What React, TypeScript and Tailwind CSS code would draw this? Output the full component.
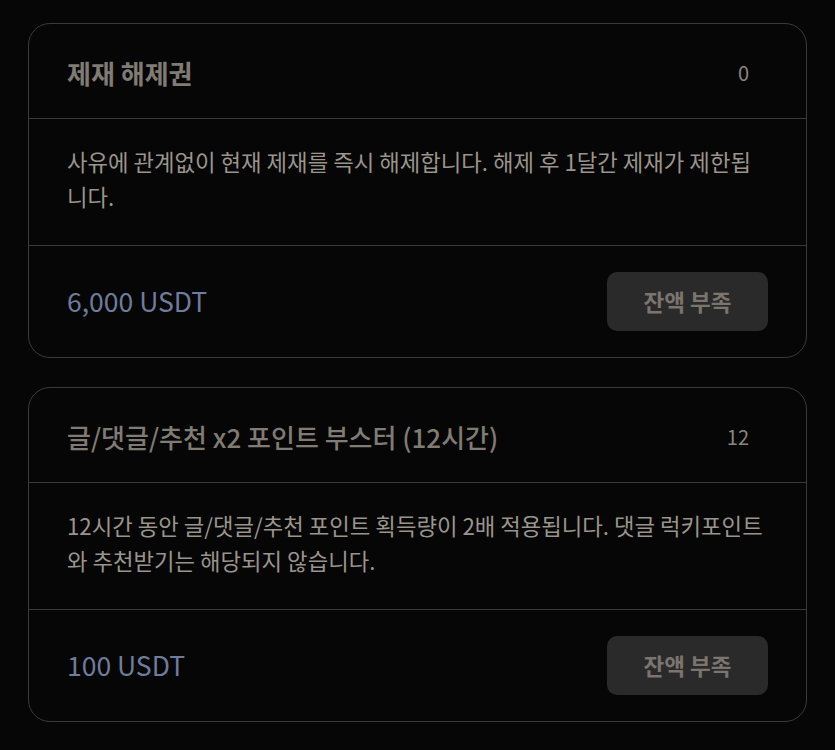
const items = [
  {
    title: '제재 해제권',
    titleWeight: 'font-bold',
    count: 0,
    description: '사유에 관계없이 현재 제재를 즉시 해제합니다. 해제 후 1달간 제재가 제한됩니다.',
    price: '6,000 USDT',
  },
  {
    title: '글/댓글/추천 x2 포인트 부스터 (12시간)',
    titleWeight: 'font-medium',
    count: 12,
    description:
      '12시간 동안 글/댓글/추천 포인트 획득량이 2배 적용됩니다. 댓글 럭키포인트와 추천받기는 해당되지 않습니다.',
    price: '100 USDT',
  },
];

type Item = (typeof items)[number];

function ItemCard({ item }: { item: Item }) {
  return (
    <div className="rounded-[22px] border border-[#3a3a3a] bg-[#060606]">
      <div className="flex h-[95px] items-center justify-between border-b border-[#3a3a3a] pl-[38px] pr-[57px] pt-[4px]">
        <h3 className={`text-[26px] leading-none text-[#807b73] ${item.titleWeight}`}>{item.title}</h3>
        <span className="text-[20px] leading-none text-[#8a857d]">{item.count}</span>
      </div>
      <p className="border-b border-[#3a3a3a] px-[38px] pt-[25px] pb-[31px] text-[22.3px] leading-[35px] text-[#9a958c]">
        {item.description}
      </p>
      <div className="flex h-[111px] items-center justify-between px-[38px]">
        <span className="text-[26.5px] leading-none text-[#6f7c9c]">{item.price}</span>
        <button
          type="button"
          disabled
          className="h-[59px] w-[161px] rounded-[10px] bg-[#2a2a2a] text-[22.5px] font-bold text-[#7a756e]"
        >
          잔액 부족
        </button>
      </div>
    </div>
  );
}

export default function App() {
  return (
    <div className="min-h-screen bg-[#060606] px-[28px] pt-[23px] pb-[28px] font-['Noto_Sans_CJK_KR','Noto_Sans',sans-serif]">
      <div className="flex flex-col gap-[29px]">
        {items.map((item) => (
          <ItemCard key={item.title} item={item} />
        ))}
      </div>
    </div>
  );
}
